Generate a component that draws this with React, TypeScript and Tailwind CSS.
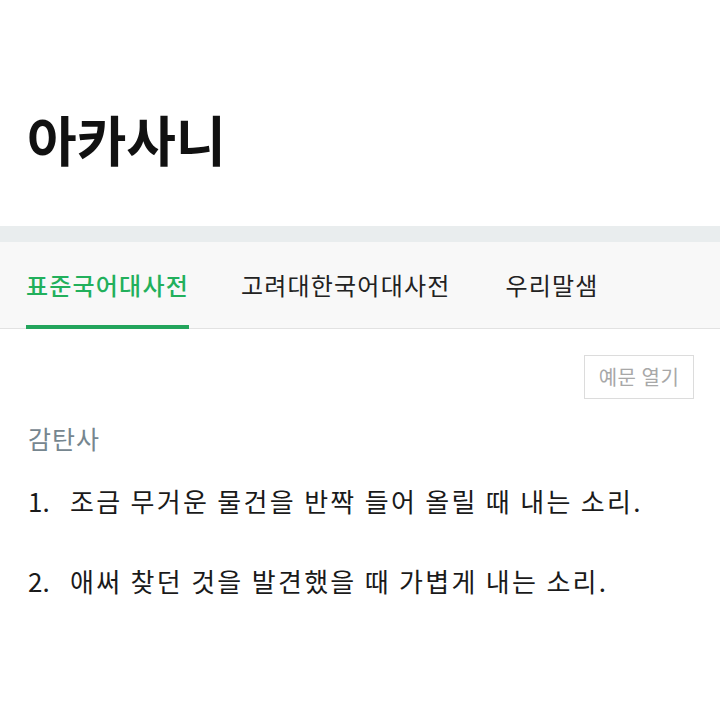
const tabs = ["표준국어대사전", "고려대한국어대사전", "우리말샘"];

const meanings = [
  "조금 무거운 물건을 반짝 들어 올릴 때 내는 소리.",
  "애써 찾던 것을 발견했을 때 가볍게 내는 소리.",
];

export default function App() {
  return (
    <div
      className="w-[720px] h-[720px] bg-white text-[#111] overflow-hidden"
      style={{ fontFamily: '"Noto Sans CJK KR", "Noto Sans", sans-serif' }}
    >
      <div className="h-[226px] px-[27px] pt-[99px]">
        <h1 className="text-[54px] leading-[80px] font-bold">아카사니</h1>
      </div>
      <div className="h-[16px] bg-[#e9edee]" />
      <div className="h-[87px] bg-[#f8f8f8] border-b border-[#e2e2e2] flex px-[26px] gap-[52px]">
        {tabs.map((t, i) => (
          <div
            key={t}
            className={`relative flex items-center text-[24px] tracking-[1.2px] ${
              i === 0 ? "text-[#22b05c] font-medium" : "text-[#222]"
            } ${i === 2 ? "ml-[3px]" : ""}`}
          >
            {t}
            {i === 0 && (
              <span className="absolute left-0 right-0 bottom-[-1px] h-[4px] bg-[#23a55c]" />
            )}
          </div>
        ))}
      </div>
      <div className="flex justify-end pr-[26px] pt-[26px]">
        <button className="w-[110px] h-[44px] border border-[#dcdcdc] text-[20px] text-[#a8a8a8] tracking-[0.5px]">
          예문 열기
        </button>
      </div>
      <div className="px-[28px] pt-[24px]">
        <div className="text-[25px] tracking-[1px] text-[#76868f] leading-[30px]">감탄사</div>
        <ol className="mt-[31px] flex flex-col gap-[46px]">
          {meanings.map((m, i) => (
            <li key={i} className="flex text-[26px] leading-[34px] text-[#1a1a1a]">
              <span className="w-[42px]">{i + 1}.</span>
              <span className="tracking-[2.3px]">{m}</span>
            </li>
          ))}
        </ol>
      </div>
    </div>
  );
}
